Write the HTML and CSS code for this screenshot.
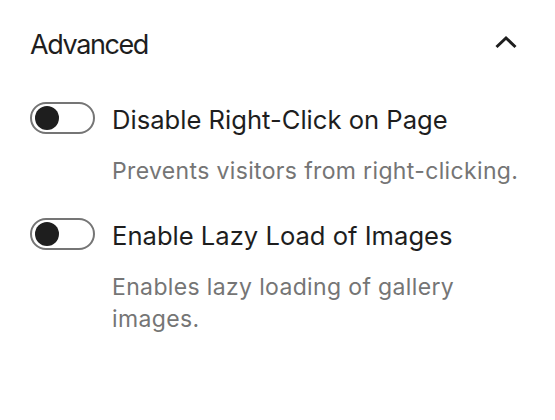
FILE: index.html
```html
<!DOCTYPE html>
<html>
<head>
<meta charset="utf-8">
<link rel="stylesheet" href="styles.css">
</head>
<body>
<div class="panel">
  <div class="panel-header">
    <h2 class="panel-title">Advanced</h2>
    <svg class="chevron" width="24" height="14" viewBox="0 0 24 14" aria-hidden="true">
      <path d="M2.5 12 L12 3 L21.5 12" fill="none" stroke="#1e1e1e" stroke-width="3"/>
    </svg>
  </div>
  <div class="settings">
    <div class="setting">
      <div class="setting-row">
        <span class="toggle"><span class="knob"></span></span>
        <span class="label">Disable Right-Click on Page</span>
      </div>
      <p class="help">Prevents visitors from right-clicking.</p>
    </div>
    <div class="setting">
      <div class="setting-row">
        <span class="toggle"><span class="knob"></span></span>
        <span class="label">Enable Lazy Load of Images</span>
      </div>
      <p class="help">Enables lazy loading of gallery images.</p>
    </div>
  </div>
</div>
</body>
</html>
```
FILE: styles.css
```css
html, body {
  margin: 0;
  padding: 0;
  background: #ffffff;
}
body {
  font-family: Inter, "Noto Sans", sans-serif;
  color: #1e1e1e;
}
.panel {
  width: 555px;
  padding: 25px 0 0 0;
  box-sizing: border-box;
}
.panel-header {
  display: flex;
  align-items: center;
  justify-content: space-between;
  padding: 0 37px 0 30px;
  height: 40px;
}
.panel-title {
  margin: 0;
  font-size: 27px;
  font-weight: 400;
  line-height: 40px;
  letter-spacing: -1.4px;
}
.chevron {
  display: block;
  margin-top: -6px;
}
.settings {
  margin-top: 37px;
  display: flex;
  flex-direction: column;
  gap: 31px;
}
.setting {
  padding-left: 30px;
}
.setting-row {
  display: flex;
  align-items: center;
  gap: 17px;
  height: 32px;
}
.toggle {
  box-sizing: border-box;
  width: 65px;
  height: 32px;
  border: 2px solid #757575;
  border-radius: 16px;
  display: flex;
  align-items: center;
  padding-left: 3px;
}
.knob {
  width: 24px;
  height: 24px;
  border-radius: 50%;
  background: #1e1e1e;
}
.label {
  font-size: 25.6px;
  line-height: 32px;
  margin-top: 4px;
}
.help {
  margin: 21px 0 0 82px;
  width: 420px;
  font-size: 23px;
  letter-spacing: 0.35px;
  line-height: 32px;
  color: #757575;
}
```
